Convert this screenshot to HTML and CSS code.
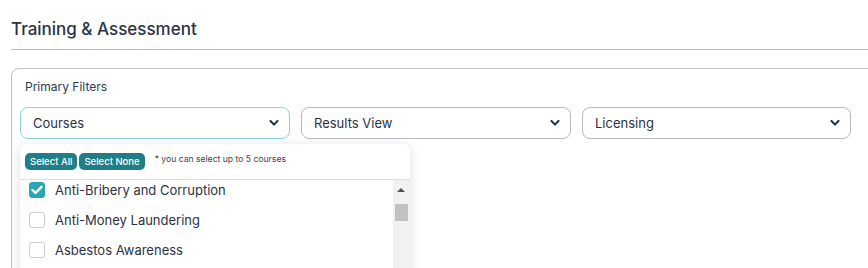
FILE: index.html
```html
<!DOCTYPE html>
<html>
<head>
<meta charset="utf-8">
<link rel="stylesheet" href="styles.css">
</head>
<body>
<div class="page">
  <h1 class="title">Training &amp; Assessment</h1>
  <div class="rule"></div>
  <section class="card">
    <div class="card-label">Primary Filters</div>
    <div class="filters">
      <div class="filter-wrap">
        <div class="select active"><span>Courses</span>
          <svg class="chev" width="10" height="6" viewBox="0 0 10 6"><polyline points="1.5,1 5,4.6 8.5,1" fill="none" stroke="#22304a" stroke-width="2" stroke-linecap="round" stroke-linejoin="round"/></svg>
        </div>
        <div class="dropdown">
          <div class="dd-head">
            <button class="btn">Select All</button><button class="btn">Select None</button>
            <span class="note">* you can select up to 5 courses</span>
          </div>
          <div class="dd-body">
            <ul class="list">
              <li class="item"><span class="cb checked"><svg width="12" height="10" viewBox="0 0 12 10"><polyline points="1.5,5 4.5,8 10.5,1.8" fill="none" stroke="#fff" stroke-width="2.4" stroke-linecap="round" stroke-linejoin="round"/></svg></span>Anti-Bribery and Corruption</li>
              <li class="item"><span class="cb"></span>Anti-Money Laundering</li>
              <li class="item"><span class="cb"></span>Asbestos Awareness</li>
            </ul>
            <div class="scrollbar">
              <div class="arrow"></div>
              <div class="thumb"></div>
            </div>
          </div>
        </div>
      </div>
      <div class="select"><span>Results View</span>
        <svg class="chev" width="10" height="6" viewBox="0 0 10 6"><polyline points="1.5,1 5,4.6 8.5,1" fill="none" stroke="#22304a" stroke-width="2" stroke-linecap="round" stroke-linejoin="round"/></svg>
      </div>
      <div class="select narrow"><span>Licensing</span>
        <svg class="chev" width="10" height="6" viewBox="0 0 10 6"><polyline points="1.5,1 5,4.6 8.5,1" fill="none" stroke="#22304a" stroke-width="2" stroke-linecap="round" stroke-linejoin="round"/></svg>
      </div>
    </div>
  </section>
</div>
</body>
</html>
```

FILE: styles.css
```css
* { box-sizing: border-box; }
html, body { margin: 0; padding: 0; background: #fff; overflow: hidden; }
body { font-family: "Inter", "Lato", sans-serif; color: #2b3245; }
.page { padding: 17px 0 0 11px; height: 268px; }
.title {
  margin: 0;
  font-size: 17px;
  font-weight: 500;
  line-height: 24px;
  color: #2b3245;
}
.rule { height: 1px; background: #b9bdc4; margin-top: 8px; }
.card {
  margin-top: 18px;
  margin-right: -20px;
  border: 1px solid #c0c4ca;
  border-radius: 8px;
  padding: 9px 0 0 8px;
  height: 300px;
}
.card-label {
  padding-left: 5px;
  font-size: 12px;
  line-height: 18px;
  color: #2b3a55;
}
.filters {
  display: flex;
  gap: 11px;
  margin-top: 11px;
}
.filter-wrap { position: relative; }
.select {
  width: 270px;
  height: 32px;
  border: 1px solid #b6bac1;
  border-radius: 8px;
  display: flex;
  align-items: center;
  justify-content: space-between;
  padding: 0 10px 0 12px;
  font-size: 13px;
  color: #2b3245;
}
.select.narrow { width: 269px; }
.select.active { border-color: #86d6de; }
.chev { display: block; }
.dropdown {
  position: absolute;
  left: 0;
  top: 37px;
  width: 390px;
  height: 200px;
  background: #fff;
  border-radius: 8px 8px 0 0;
  box-shadow: 0 2px 12px rgba(0,0,0,0.14);
  z-index: 2;
}
.dd-head {
  display: flex;
  align-items: flex-start;
  padding: 9px 0 0 5px;
  height: 36px;
  border-bottom: 1px solid #dcdfe3;
}
.btn {
  font-family: "Inter", "Lato", sans-serif;
  font-size: 9.5px;
  font-weight: 500;
  color: #fff;
  background: #1f7e86;
  border: none;
  border-radius: 5px;
  height: 17px;
  padding: 0 5px;
  margin-right: 2px;
  line-height: 17px;
}
.note {
  font-size: 8.6px;
  color: #3a3f4b;
  margin-left: 8px;
  margin-top: 1px;
}
.dd-body { display: flex; }
.list {
  list-style: none;
  margin: 0;
  padding: 2px 0 0 9px;
  flex: 1;
}
.item {
  display: flex;
  align-items: center;
  height: 16px;
  margin-bottom: 14px;
  font-size: 13px;
  color: #2b3245;
  gap: 10px;
}
.cb {
  width: 16px;
  height: 16px;
  border: 1px solid #c9ccd1;
  border-radius: 3px;
  display: flex;
  align-items: center;
  justify-content: center;
  flex: none;
}
.cb.checked { background: #2aa5b2; border-color: #2aa5b2; }
.scrollbar {
  width: 17px;
  height: 100px;
  background: #f1f1f1;
  position: relative;
}
.arrow {
  position: absolute;
  left: 4px;
  top: 8px;
  width: 0; height: 0;
  border-left: 4px solid transparent;
  border-right: 4px solid transparent;
  border-bottom: 4px solid #505050;
}
.thumb {
  position: absolute;
  left: 2px;
  top: 24px;
  width: 13px;
  height: 17px;
  background: #c1c1c1;
}
```
